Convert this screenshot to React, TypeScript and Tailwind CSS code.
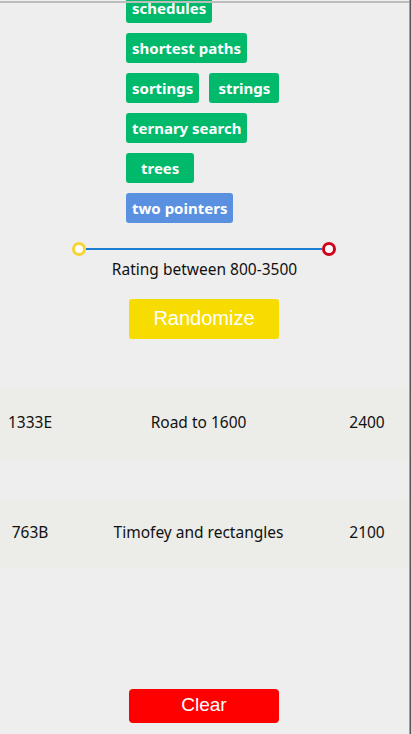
import React from "react";

const green = "bg-[#00b96b]";

function Tag({ label, blue, px }: { label: string; blue?: boolean; px?: string }) {
  return (
    <div
      className={`h-[30px] flex items-center justify-center rounded-[3px] text-white font-bold text-[15px] ${
        px ?? "px-[6px]"
      } ${blue ? "bg-[#5a90e0]" : green}`}
    >
      {label}
    </div>
  );
}

function Row({ code, name, rating }: { code: string; name: string; rating: string }) {
  return (
    <div className="h-[70px] bg-[#ececE8] flex items-center text-[15.5px] text-[#111] pb-[3px]">
      <div className="w-[60px] text-center">{code}</div>
      <div className="flex-1 text-center pl-[12px]">{name}</div>
      <div className="w-[84px] text-center">{rating}</div>
    </div>
  );
}

export default function App() {
  return (
    <div
      className="relative w-[411px] h-[734px] overflow-hidden bg-[#eeeeee]"
      style={{ fontFamily: '"Noto Sans", "Open Sans", sans-serif' }}
    >
      <div className="absolute left-0 top-[1px] w-[411px] h-[2px] bg-[#bdbdbd] z-10" />
      <div className="absolute right-0 top-0 h-full w-[2px] border-l border-[#a0a0a0] bg-[#555] z-10" />

      <div className="w-[409px] flex flex-col">
        <div className="-mt-[7px] pl-[126px] flex flex-col gap-[10px]">
          <div className="flex"><Tag label="schedules" /></div>
          <div className="flex"><Tag label="shortest paths" /></div>
          <div className="flex gap-[10px]"><Tag label="sortings" /><Tag label="strings" px="px-[9px]" /></div>
          <div className="flex"><Tag label="ternary search" /></div>
          <div className="flex"><Tag label="trees" px="px-[15px]" /></div>
          <div className="flex"><Tag label="two pointers" blue /></div>
        </div>

        <div className="mt-[19px] h-[14px] pl-[72px] flex items-center">
          <div className="w-[14px] h-[14px] rounded-full border-[3px] border-[#f5d433] bg-white" />
          <div className="w-[236px] h-[2px] bg-[#1c7fd6]" />
          <div className="w-[14px] h-[14px] rounded-full border-[3px] border-[#d0021b] bg-white" />
        </div>

        <div className="mt-[3px] text-center text-[15.5px] leading-[20px] text-[#111]">
          Rating between 800-3500
        </div>

        <div className="mt-[20px] flex pl-[129px]">
          <div
            className="w-[150px] h-[40px] rounded-[3px] bg-[#f6dc00] text-white text-[20px] flex items-center justify-center pb-[3px]"
            style={{ fontFamily: '"Liberation Sans", Arial, sans-serif' }}
          >
            Randomize
          </div>
        </div>

        <div className="mt-[50px] flex flex-col gap-[40px]">
          <Row code="1333E" name="Road to 1600" rating="2400" />
          <Row code="763B" name="Timofey and rectangles" rating="2100" />
        </div>

        <div className="mt-[120px] flex pl-[129px]">
          <div
            className="w-[150px] h-[34px] rounded-[4px] bg-[#ff0000] text-white text-[19px] flex items-center justify-center pb-[2px]"
            style={{ fontFamily: '"Liberation Sans", Arial, sans-serif' }}
          >
            Clear
          </div>
        </div>
      </div>
    </div>
  );
}
